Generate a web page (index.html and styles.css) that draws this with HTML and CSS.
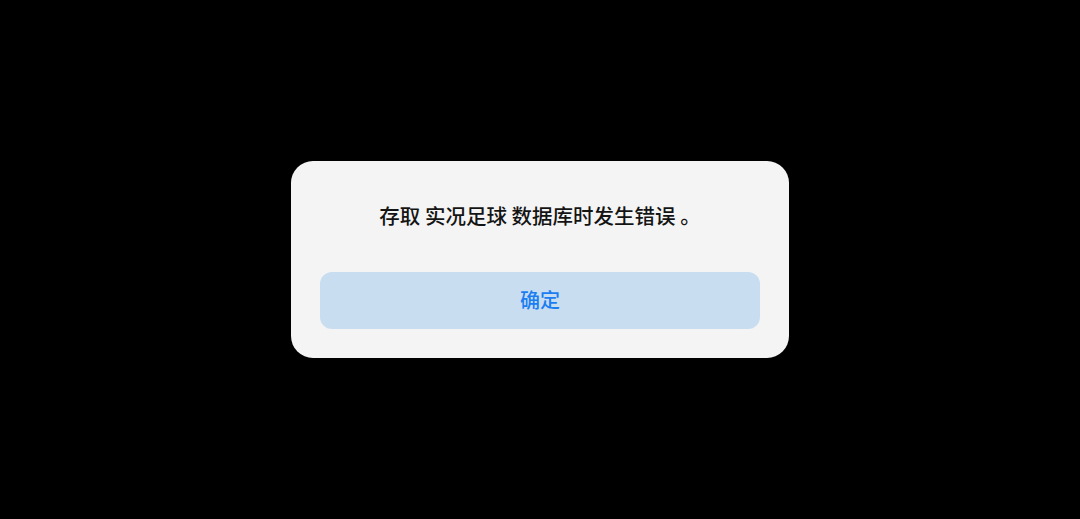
FILE: index.html
```html
<!DOCTYPE html>
<html lang="zh-CN">
<head>
  <meta charset="UTF-8">
  <meta name="viewport" content="width=device-width, initial-scale=1.0">
  <title>错误</title>
  <link rel="stylesheet" href="styles.css">
</head>
<body>
  <div class="dialog">
    <p class="dialog-message">存取 实况足球 数据库时发生错误 。</p>
    <button class="dialog-button">确定</button>
  </div>
</body>
</html>
```

FILE: styles.css
```css
:root {
  --dialog-bg: #f4f4f4;
  --button-bg: #c9ddf1;
  --button-text: #1a7ef2;
  --text-color: #141414;
}

* {
  box-sizing: border-box;
}

body {
  margin: 0;
  min-height: 100vh;
  background: #000;
  display: flex;
  justify-content: center;
  align-items: center;
  font-family: 'Noto Sans CJK SC', 'Noto Sans', sans-serif;
}

.dialog {
  width: 498px;
  background: var(--dialog-bg);
  border-radius: 22px;
  padding: 40px 29px 29px;
  display: flex;
  flex-direction: column;
  align-items: center;
}

.dialog-message {
  margin: 0 0 43px;
  font-size: 20.5px;
  line-height: 28px;
  font-weight: 500;
  color: var(--text-color);
  text-align: center;
}

.dialog-button {
  width: 100%;
  height: 57px;
  border: none;
  border-radius: 12px;
  background: var(--button-bg);
  color: var(--button-text);
  font-family: inherit;
  font-size: 20px;
  font-weight: 500;
  padding: 0 0 3px;
  cursor: pointer;
}
```
